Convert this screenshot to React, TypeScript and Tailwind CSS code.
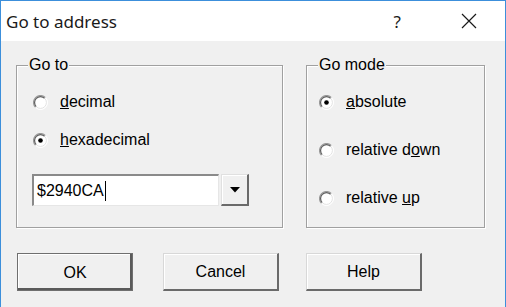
import React from "react";

function Radio({ checked }: { checked?: boolean }) {
  return (
    <svg width="15" height="15" viewBox="0 0 15 15" className="shrink-0">
      <circle cx="7.5" cy="7.5" r="7" fill="#ffffff" />
      <path d="M2.55 12.45 A7 7 0 0 1 12.45 2.55" fill="none" stroke="#9a9a9a" strokeWidth="1.2" />
      <path d="M3.3 11.7 A5.9 5.9 0 0 1 11.7 3.3" fill="none" stroke="#5f5f5f" strokeWidth="1.2" />
      <path d="M12.45 2.55 A7 7 0 0 1 2.55 12.45" fill="none" stroke="#ffffff" strokeWidth="1" />
      <path d="M11.7 3.3 A5.9 5.9 0 0 1 3.3 11.7" fill="none" stroke="#e3e3e3" strokeWidth="1" />
      {checked && <circle cx="7.5" cy="7.5" r="2.3" fill="#000000" />}
    </svg>
  );
}

function RadioRow({ checked, children }: { checked?: boolean; children: React.ReactNode }) {
  return (
    <div className="flex h-[24px] items-center gap-[12px]">
      <Radio checked={checked} />
      <span className="leading-none">{children}</span>
    </div>
  );
}

function GroupBox({ label, className, children }: { label: string; className: string; children: React.ReactNode }) {
  return (
    <div className={`relative border border-[#a0a0a0] shadow-[1px_1px_0_#ffffff,inset_1px_1px_0_#ffffff] ${className}`}>
      <span className="absolute -top-[10px] left-[11px] bg-[#f0f0f0] px-px leading-[18px]">{label}</span>
      {children}
    </div>
  );
}

function Button({ label, isDefault }: { label: string; isDefault?: boolean }) {
  return (
    <button
      className={`h-[38px] w-[116px] bg-[#f0f0f0] pt-px text-black leading-none ${
        isDefault
          ? "border border-[#6f6f6f] shadow-[inset_-2px_-2px_0_#5a5a5a,inset_1px_1px_0_#ffffff]"
          : "border-t border-l border-t-[#d8d8d8] border-l-[#d8d8d8] border-r-2 border-b-2 border-r-[#6a6a6a] border-b-[#6a6a6a] shadow-[inset_1px_1px_0_#ffffff]"
      }`}
    >
      {label}
    </button>
  );
}

export default function App() {
  return (
    <div
      className="flex h-[307px] w-[506px] flex-col overflow-hidden border-x border-t border-[#3c8fdb] bg-[#f0f0f0] text-[16px] text-black"
      style={{ fontFamily: '"Liberation Sans", Arial, sans-serif' }}
    >
      <div className="flex h-[40px] shrink-0 items-center bg-white pl-[5px]" style={{ fontFamily: '"Noto Sans", sans-serif' }}>
        <span className="text-[17px] leading-none text-[#1a1a1a]">Go to address</span>
        <span className="ml-auto mr-[60px] text-[17px] leading-none text-[#1a1a1a]">?</span>
        <svg width="16" height="16" viewBox="0 0 16 16" className="mr-[28px]">
          <path d="M1 1 L15 15 M15 1 L1 15" stroke="#1a1a1a" strokeWidth="1.2" />
        </svg>
      </div>

      <div className="flex flex-1 flex-col pl-[15px] pt-[24px]">
        <div className="flex gap-[23px]">
          <GroupBox label="Go to" className="h-[163px] w-[267px] pl-[16px] pt-[24px]">
            <div className="flex flex-col gap-[14px]">
              <RadioRow>
                <span className="underline underline-offset-1">d</span>ecimal
              </RadioRow>
              <RadioRow checked>
                <span className="underline underline-offset-1">h</span>exadecimal
              </RadioRow>
            </div>
            <div className="-ml-px mt-[22px] flex h-[32px] gap-[2px]">
              <div className="flex w-[187px] items-center border-t-2 border-l-2 border-t-[#8a8a8a] border-l-[#8a8a8a] border-b border-r border-b-[#e6e6e6] border-r-[#e6e6e6] bg-white pl-[3px]">
                <span className="leading-none">$2940CA</span>
                <span className="ml-px h-[20px] w-px bg-black" />
              </div>
              <div className="flex w-[28px] items-center justify-center border-t border-l border-t-[#e0e0e0] border-l-[#e0e0e0] border-r-2 border-b-2 border-r-[#6a6a6a] border-b-[#6a6a6a] bg-[#f0f0f0] shadow-[inset_1px_1px_0_#ffffff]">
                <svg width="10" height="6" viewBox="0 0 10 6">
                  <path d="M0 0 H10 L5 5.5 Z" fill="#000000" />
                </svg>
              </div>
            </div>
          </GroupBox>

          <GroupBox label="Go mode" className="h-[163px] w-[179px] pl-[12px] pt-[24px]">
            <div className="flex flex-col gap-[24px]">
              <RadioRow checked>
                <span className="underline underline-offset-1">a</span>bsolute
              </RadioRow>
              <RadioRow>
                relative d<span className="underline underline-offset-1">o</span>wn
              </RadioRow>
              <RadioRow>
                relative <span className="underline underline-offset-1">u</span>p
              </RadioRow>
            </div>
          </GroupBox>
        </div>

        <div className="ml-px mt-[25px] flex">
          <Button label="OK" isDefault />
          <div className="ml-[30px]">
            <Button label="Cancel" />
          </div>
          <div className="ml-[27px]">
            <Button label="Help" />
          </div>
        </div>
      </div>
    </div>
  );
}
